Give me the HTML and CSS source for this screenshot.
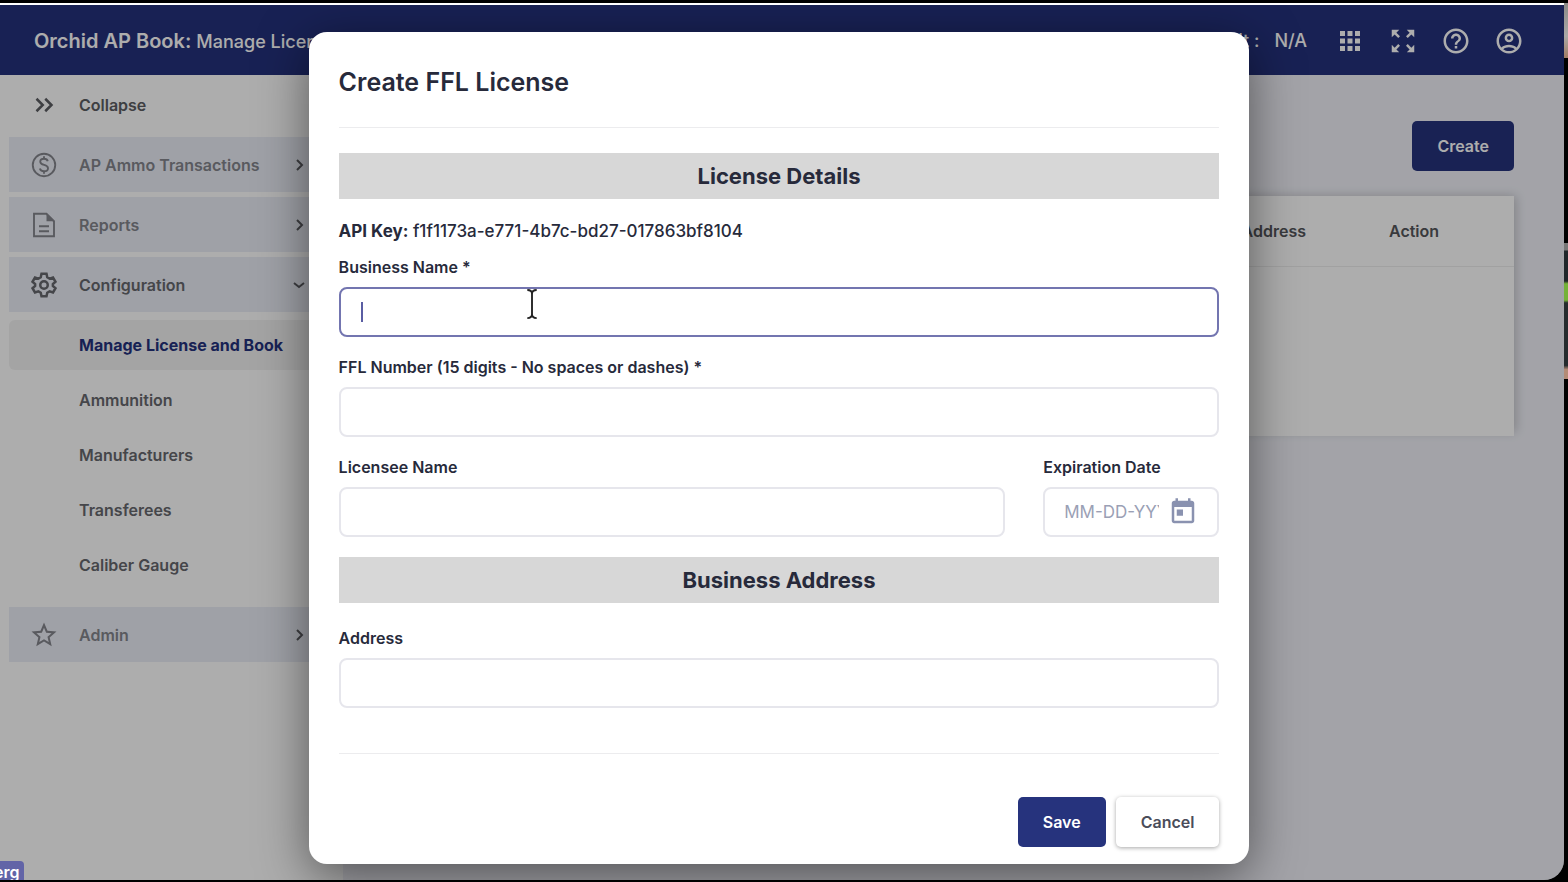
FILE: index.html
```html
<!DOCTYPE html>
<html lang="en">
	<head>
		<meta charset="utf-8" />
		<title>Orchid AP Book</title>
		<link rel="stylesheet" href="styles.css">
	</head>
	<body>
		<div class="screen">
			<header class="topbar">
				<h1 class="brand">Orchid AP Book: <span>Manage License and Book</span></h1>
				<div class="tools">
					<span class="default">Default :</span>
					<span class="book">N/A</span>
					<button type="button" aria-label="Apps">
						<svg viewBox="0 0 24 24"><path d="M4 8h4V4H4v4zm6 12h4v-4h-4v4zm-6 0h4v-4H4v4zm0-6h4v-4H4v4zm6 0h4v-4h-4v4zm6-10v4h4V4h-4zm-6 4h4V4h-4v4zm6 6h4v-4h-4v4zm0 6h4v-4h-4v4z"/></svg>
					</button>
					<button type="button" aria-label="Full screen">
						<svg viewBox="0 0 24 24"><path d="M15 3l2.3 2.3-2.9 2.9 1.4 1.4 2.9-2.9L21 9V3h-6zM3 9l2.3-2.3 2.9 2.9 1.4-1.4-2.9-2.9L9 3H3v6zm6 12l-2.3-2.3 2.9-2.9-1.4-1.4-2.9 2.9L3 15v6h6zm12-6l-2.3 2.3-2.9-2.9-1.4 1.4 2.9 2.9L15 21h6v-6z"/></svg>
					</button>
					<button type="button" aria-label="Help">
						<svg viewBox="0 0 24 24"><path d="M11 18h2v-2h-2v2zm1-16C6.48 2 2 6.48 2 12s4.480 10 10 10 10-4.480 10-10S17.520 2 12 2zm0 18c-4.410 0-8-3.590-8-8s3.590-8 8-8 8 3.590 8 8-3.590 8-8 8zm0-14c-2.210 0-4 1.790-4 4h2c0-1.100.9-2 2-2s2 .9 2 2c0 2-3 1.750-3 5h2c0-2.250 3-2.500 3-5 0-2.210-1.790-4-4-4z"/></svg>
					</button>
					<button type="button" aria-label="Account">
						<svg viewBox="0 0 24 24"><path d="M12 2C6.480 2 2 6.480 2 12s4.480 10 10 10 10-4.480 10-10S17.520 2 12 2zM7.350 18.500C8.660 17.560 10.260 17 12 17s3.340.560 4.650 1.500C15.340 19.440 13.740 20 12 20s-3.340-.560-4.650-1.500zm10.790-1.380C16.450 15.800 14.320 15 12 15s-4.450.800-6.140 2.120C4.700 15.730 4 13.950 4 12c0-4.420 3.580-8 8-8s8 3.580 8 8c0 1.950-.7 3.730-1.860 5.120zM12 6c-1.930 0-3.500 1.570-3.500 3.500S10.070 13 12 13s3.500-1.570 3.500-3.500S13.930 6 12 6zm0 5c-.830 0-1.500-.670-1.500-1.500S11.170 8 12 8s1.500.670 1.500 1.500S12.830 11 12 11z"/></svg>
					</button>
				</div>
			</header>

			<div class="main">
				<nav class="sidebar">
					<a class="row collapse" href="#">
						<svg class="icon" viewBox="0 0 24 24"><path class="line" d="M6 7l5 5-5 5M13 7l5 5-5 5"/></svg>
						<span>Collapse</span>
					</a>
					<a class="row group soft" href="#">
						<svg class="icon thin" viewBox="0 0 24 24"><circle class="line" cx="12" cy="12" r="9"/><path class="line" d="M15 9c-.3-1.300-1.400-2-3-2s-3 .800-3 2.300c0 3.500 6.200 1.800 6.200 5.200 0 1.600-1.400 2.500-3.200 2.500s-3-.800-3.300-2.200M12 5v2M12 17v2"/></svg>
						<span>AP Ammo Transactions</span>
						<svg class="arrow" viewBox="0 0 20 20"><path class="line" d="M8 5l5 5-5 5"/></svg>
					</a>
					<a class="row group soft" href="#">
						<svg class="icon thin" viewBox="0 0 24 24"><path class="line" d="M14 3H4v18h16V9zM8 13h8M8 17h8"/><path d="M14 3v6h6z"/></svg>
						<span>Reports</span>
						<svg class="arrow" viewBox="0 0 20 20"><path class="line" d="M8 5l5 5-5 5"/></svg>
					</a>
					<a class="row group" href="#">
						<svg class="icon" viewBox="0 0 24 24"><path class="line" d="M10 3h4l.6 2.800 1.900 1.100 2.700-.9 2 3.400-2.100 1.900v1.400l2.100 1.900-2 3.400-2.700-.9-1.900 1.100L14 21h-4l-.6-2.800-1.900-1.100-2.700.9-2-3.400 2.100-1.900v-1.400L2.800 9.400l2-3.400 2.700.9 1.900-1.100z"/><circle class="line" cx="12" cy="12" r="3"/></svg>
						<span>Configuration</span>
						<svg class="arrow" viewBox="0 0 20 20"><path class="line" d="M5 8l5 4 5-4"/></svg>
					</a>
					<ul class="sub">
						<li><a class="active" href="#">Manage License and Book</a></li>
						<li><a href="#">Ammunition</a></li>
						<li><a href="#">Manufacturers</a></li>
						<li><a href="#">Transferees</a></li>
						<li><a href="#">Caliber Gauge</a></li>
					</ul>
					<a class="row group soft" href="#">
						<svg class="icon" viewBox="0 0 24 24"><path d="M22 9.240l-7.190-.620L12 2 9.190 8.630 2 9.240l5.460 4.730L5.820 21 12 17.270 18.180 21l-1.630-7.030L22 9.240zM12 15.400l-3.760 2.270 1-4.280-3.320-2.880 4.380-.380L12 6.100l1.710 4.040 4.380.380-3.320 2.880 1 4.280L12 15.400z"/></svg>
						<span>Admin</span>
						<svg class="arrow" viewBox="0 0 20 20"><path class="line" d="M8 5l5 5-5 5"/></svg>
					</a>
				</nav>

				<main class="content">
					<button class="btn primary create" type="button">Create</button>
					<div class="card">
						<table>
							<thead>
								<tr><th class="address">Address</th><th class="action">Action</th></tr>
							</thead>
						</table>
					</div>
				</main>
			</div>

			<div class="backdrop">
				<form class="dialog" role="dialog" aria-labelledby="title">
					<h2 id="title">Create FFL License</h2>
					<div class="fields">
						<h3>License Details</h3>
						<p class="key"><b>API Key:</b> f1f1173a-e771-4b7c-bd27-017863bf8104</p>
						<div class="field">
							<label for="business">Business Name *</label>
							<div class="box focus">
								<input id="business" type="text">
								<i class="caret"></i>
								<svg class="pointer" viewBox="0 0 12 32"><path d="M1 1q5 0 5 4 0-4 5-4M6 4v24M1 31q5 0 5-4 0 4 5 4"/></svg>
							</div>
						</div>
						<div class="field">
							<label for="ffl">FFL Number (15 digits - No spaces or dashes) *</label>
							<div class="box"><input id="ffl" type="text"></div>
						</div>
						<div class="pair">
							<div class="field">
								<label for="licensee">Licensee Name</label>
								<div class="box"><input id="licensee" type="text"></div>
							</div>
							<div class="field date">
								<label for="expires">Expiration Date</label>
								<div class="box">
									<input id="expires" type="text" placeholder="MM-DD-YYYY">
									<button type="button" aria-label="Open calendar">
										<svg viewBox="0 0 24 24"><path d="M19 3h-1V1h-2v2H8V1H6v2H5c-1.110 0-1.990.9-1.990 2L3 19c0 1.100.89 2 2 2h14c1.100 0 2-.9 2-2V5c0-1.100-.9-2-2-2zm0 16H5V8h14v11zM7 10h5v5H7z"/></svg>
									</button>
								</div>
							</div>
						</div>
						<h3>Business Address</h3>
						<div class="field first">
							<label for="address">Address</label>
							<div class="box"><input id="address" type="text"></div>
						</div>
					</div>
					<div class="buttons">
						<button class="btn primary" type="submit">Save</button>
						<button class="btn" type="button">Cancel</button>
					</div>
				</form>
			</div>
			<div class="speaker">erg</div>
		</div>
		<div class="videos">
			<div class="video room"></div>
			<div class="video plant"></div>
		</div>
	</body>
</html>
```
FILE: styles.css
```css
*{
	margin: 0;
	padding: 0;
	box-sizing: border-box;
}

body{
	display: flex;
	height: 100vh;
	padding: 3px 0 2px;
	overflow: hidden;
	background: #000;
	color: #272a3b;
	font: 600 16px/20px Inter, sans-serif;
}

a{
	color: inherit;
	text-decoration: none;
}

ul{
	list-style: none;
}

button, input{
	border: 0;
	background: none;
	color: inherit;
	font: inherit;
}

svg{
	display: block;
	fill: currentColor;
}

.line{
	fill: none;
	stroke: currentColor;
	stroke-width: 2;
}

.screen{
	position: relative;
	display: flex;
	flex: 1;
	flex-direction: column;
	overflow: hidden;
	border-top: 2px solid #fff;
	border-radius: 0 0 20px 0;
	background: #f0f1f8;
}

/* top bar */
.topbar{
	display: flex;
	align-items: center;
	justify-content: space-between;
	height: 70px;
	padding: 2px 40px 0 34px;
	background: #24317c;
	color: #fff;
}

.brand{
	font-size: 20px;
	font-weight: 600;
}

.brand span{
	font-size: 18px;
	font-weight: 500;
}

.tools{
	display: flex;
	align-items: center;
	gap: 23px;
	font-size: 18px;
	font-weight: 500;
}

.default{
	margin-right: -8px;
}

.book{
	margin-right: 5px;
}

.tools svg{
	width: 30px;
	height: 30px;
}

/* sidebar */
.main{
	display: flex;
	flex: 1;
}

.sidebar{
	display: flex;
	flex-direction: column;
	gap: 5px;
	width: 343px;
	padding: 2px 0 0 9px;
	background: #fff;
	color: #66676d;
}

.row{
	display: flex;
	align-items: center;
	gap: 20px;
	height: 55px;
	padding: 0 34px 0 20px;
}

.row span{
	flex: 1;
}

.collapse{
	color: #5c5d62;
}

.group{
	background: #ebeef7;
}

.soft{
	color: #84858c;
}

.icon{
	width: 30px;
	height: 30px;
}

.thin .line{
	stroke-width: 1.5;
}

.arrow{
	width: 20px;
	height: 20px;
	color: #5c5d62;
}

.sub{
	margin-bottom: 10px;
}

.sub li{
	padding: 3px 0 2px;
}

.sub a{
	display: block;
	padding-left: 70px;
	line-height: 50px;
}

.sub .active{
	border-radius: 6px 0 0 6px;
	background: #f2f2f2;
	color: #24317c;
	font-weight: 700;
}

/* page */
.content{
	flex: 1;
	padding: 46px 50px;
}

.btn{
	height: 50px;
	padding: 0 25px;
	border-radius: 5px;
	background: #fff;
	color: #4b4d5a;
	box-shadow: 0 1px 4px rgba(0, 0, 0, .35);
}

.primary{
	background: #26337d;
	color: #fff;
	box-shadow: none;
}

.create{
	display: block;
	margin: 0 0 25px auto;
}

.card{
	height: 240px;
	background: #fff;
	box-shadow: 4px -2px 10px -2px rgba(0, 0, 0, .2);
}

table{
	width: 100%;
	border-collapse: collapse;
}

th{
	height: 70px;
	border-bottom: 1px solid #eee;
	color: #55565b;
	font-weight: 600;
}

.address{
	text-align: right;
}

.action{
	width: 208px;
	padding-left: 83px;
	text-align: left;
}

/* dialog */
.backdrop{
	position: absolute;
	inset: 0;
	display: flex;
	align-items: flex-start;
	justify-content: center;
	padding: 27px 6px 0 0;
	background: rgba(0, 0, 0, .32);
}

.dialog{
	width: 60vw;
	padding: 30px 30px 17px;
	border-radius: 18px;
	background: #fff;
	box-shadow: 0 12px 50px rgba(0, 0, 0, .5);
}

.dialog h2{
	font-size: 25px;
	font-weight: 600;
	line-height: 40px;
}

.fields{
	display: flex;
	flex-direction: column;
	gap: 20px;
	margin: 25px 0 43px;
	padding: 25px 0 45px;
	border: 1px solid #ececee;
	border-width: 1px 0;
}

.dialog h3{
	background: #d7d7d7;
	font-size: 22px;
	font-weight: 700;
	line-height: 46px;
	text-align: center;
}

.key{
	margin-bottom: -6px;
	font-size: 17px;
	font-weight: 500;
	line-height: 24px;
}

.key b{
	font-weight: 700;
}

.field{
	flex: 1;
}

.field label{
	display: block;
	margin-bottom: 10px;
}

.first{
	margin-top: 5px;
}

.box{
	position: relative;
	display: flex;
	align-items: center;
	height: 50px;
	padding: 0 20px;
	border: 2px solid #e6e6ec;
	border-radius: 8px;
}

.focus{
	border-color: #7375b0;
}

.box input{
	flex: 1;
	width: 100%;
	min-width: 0;
	height: 100%;
	outline: 0;
	font-weight: 400;
}

.box input::placeholder{
	color: #9aa0b5;
}

.box svg{
	width: 30px;
	height: 30px;
}

.caret{
	position: absolute;
	left: 20px;
	width: 2px;
	height: 20px;
	background: #5a5da3;
}

.box .pointer{
	position: absolute;
	top: 0;
	left: 185px;
	width: 12px;
	fill: none;
	stroke: #222;
	stroke-width: 2;
}

.pair{
	display: flex;
	gap: 38px;
}

.pair .date{
	flex: 0 0 20%;
	min-width: 0;
}

.date .box{
	gap: 9px;
	padding: 0 19px;
}

.date .box input{
	font-size: 17px;
}

.date button{
	color: #8a92b0;
}

.buttons{
	display: flex;
	justify-content: flex-end;
	gap: 10px;
}

/* name tag of the person speaking */
.speaker{
	position: absolute;
	bottom: 0;
	left: 0;
	width: 24px;
	height: 19px;
	overflow: hidden;
	border-radius: 0 4px 0 0;
	background: #6264a7;
	color: #fff;
	line-height: 22px;
	text-indent: -6px;
}

.videos{
	width: 4px;
}

.room{
	height: 55px;
	background: linear-gradient(#8b8a87, #aaa9a6 60%, #a27c63);
}

.plant{
	height: 136px;
	margin-top: 185px;
	background: linear-gradient(#777 5%, #20262a 6% 28%, #75b238 30% 42%, #252b2d 44% 90%, #b48b76 93%);
}
```
